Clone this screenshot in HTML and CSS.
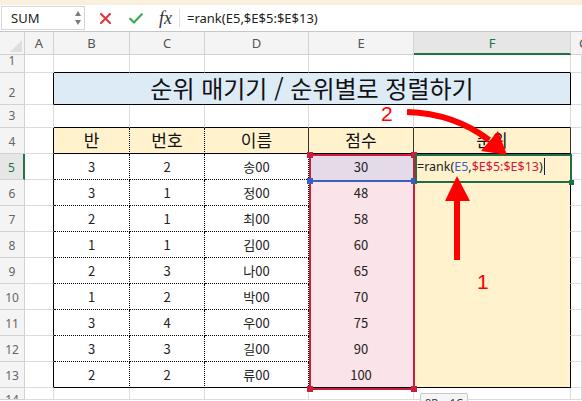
FILE: index.html
```html
<!DOCTYPE html>
<html lang="ko">
<head>
<meta charset="utf-8">
<link rel="stylesheet" href="styles.css">
</head>
<body>
<div class="strip"></div>
<div class="fbar">
  <div class="namebox"><span>SUM</span>
    <span class="spin"><span class="up"></span><span class="down"></span></span>
  </div>
  <svg class="ic-x" width="11" height="11" viewBox="0 0 11 11"><path d="M1 1L10 10M10 1L1 10" stroke="#e03a3e" stroke-width="2.2" stroke-linecap="round" fill="none"/></svg>
  <svg class="ic-ok" width="14" height="11" viewBox="0 0 14 11"><path d="M1.2 5.8L5 9.5L12.8 1.3" stroke="#3aaa56" stroke-width="2.2" stroke-linecap="round" stroke-linejoin="round" fill="none"/></svg>
  <span class="fx">fx</span>
  <span class="fsep"></span>
  <span class="ftext">=rank(E5,$E$5:$E$13)</span>
</div>
<div class="sheet">
  <div class="c corner"></div>
  <div class="c ch">A</div><div class="c ch">B</div><div class="c ch">C</div><div class="c ch">D</div><div class="c ch">E</div><div class="c ch sel">F</div><div class="c ch g">G</div>

  <div class="c rh">1</div><div class="c"></div><div class="c tb"></div><div class="c tb"></div><div class="c tb"></div><div class="c tb"></div><div class="c tb"></div><div class="c"></div>
  <div class="c rh">2</div><div class="c tl"></div><div class="c title">순위 매기기 / 순위별로 정렬하기</div><div class="c"></div>
  <div class="c rh">3</div><div class="c"></div><div class="c tb"></div><div class="c tb"></div><div class="c tb"></div><div class="c tb"></div><div class="c tb"></div><div class="c"></div>
  <div class="c rh">4</div><div class="c tl"></div><div class="c hd dot">반</div><div class="c hd dot">번호</div><div class="c hd solid">이름</div><div class="c hd solid">점수</div><div class="c hd solid">순위</div><div class="c"></div>

  <div class="c rh sel">5</div><div class="c tl"></div><div class="c d">3</div><div class="c d">2</div><div class="c d">송00</div><div class="c sc cur">30</div><div class="c rk"><span class="ftxt">=rank(<span class="ref-b">E5</span>,<span class="ref-r">$E$5:$E$13</span>)</span><span class="caret"></span></div><div class="c"></div>
  <div class="c rh">6</div><div class="c tl"></div><div class="c d">3</div><div class="c d">1</div><div class="c d">정00</div><div class="c sc">48</div><div class="c rk"></div><div class="c"></div>
  <div class="c rh">7</div><div class="c tl"></div><div class="c d">2</div><div class="c d">1</div><div class="c d">최00</div><div class="c sc">58</div><div class="c rk"></div><div class="c"></div>
  <div class="c rh">8</div><div class="c tl"></div><div class="c d">1</div><div class="c d">1</div><div class="c d">김00</div><div class="c sc">60</div><div class="c rk"></div><div class="c"></div>
  <div class="c rh">9</div><div class="c tl"></div><div class="c d">2</div><div class="c d">3</div><div class="c d">나00</div><div class="c sc">65</div><div class="c rk"></div><div class="c"></div>
  <div class="c rh">10</div><div class="c tl"></div><div class="c d">1</div><div class="c d">2</div><div class="c d">박00</div><div class="c sc">70</div><div class="c rk"></div><div class="c"></div>
  <div class="c rh">11</div><div class="c tl"></div><div class="c d">3</div><div class="c d">4</div><div class="c d">우00</div><div class="c sc">75</div><div class="c rk"></div><div class="c"></div>
  <div class="c rh">12</div><div class="c tl"></div><div class="c d">3</div><div class="c d">3</div><div class="c d">길00</div><div class="c sc">90</div><div class="c rk"></div><div class="c"></div>
  <div class="c rh">13</div><div class="c tl"></div><div class="c d lb">2</div><div class="c d lb">2</div><div class="c d lb">류00</div><div class="c sc lb">100</div><div class="c rk lb"></div><div class="c"></div>

  <div class="c rh last">14</div><div class="c"></div><div class="c"></div><div class="c"></div><div class="c"></div><div class="c"></div><div class="c"></div><div class="c"></div>
</div>

<div class="range-red"></div>
<div class="hdl red h-tl"></div>
<div class="hdl red h-tr"></div>
<div class="hdl red h-bl"></div>
<div class="hdl red h-br"></div>
<div class="range-blue"></div>
<div class="hdl blue b-l"></div>
<div class="hdl blue b-r"></div>
<div class="active"></div>
<div class="hdl green g-h"></div>
<div class="tip">9R x 1C</div>

<svg class="arrows" width="582" height="401" viewBox="0 0 582 401">
  <path d="M407 112 C440 113 468 124 489 140" stroke="#ff0000" stroke-width="6" fill="none"/>
  <polygon points="481,151 498,131 507,155" fill="#ff0000"/>
  <rect x="454" y="198" width="6" height="62" fill="#ff0000"/>
  <polygon points="445,201 470,201 457,176" fill="#ff0000"/>
  <text x="381" y="121" class="lbl">2</text>
  <text x="477" y="289" class="lbl">1</text>
</svg>
</body>
</html>
```

FILE: styles.css
```css
body {
  margin: 0;
  width: 582px;
  height: 401px;
  overflow: hidden;
  background: #fff;
  font-family: "Noto Sans CJK KR", "Noto Sans", sans-serif;
  position: relative;
}

.strip {
  height: 5px;
  background: #f8efdc;
}

.fbar {
  height: 27px;
  box-sizing: border-box;
  border-bottom: 1px solid #c6c6c6;
  display: flex;
  align-items: center;
  background: #fff;
}

.namebox {
  margin-left: 1px;
  width: 84px;
  height: 24px;
  box-sizing: border-box;
  border: 1px solid #d6d6d6;
  display: flex;
  align-items: center;
  justify-content: space-between;
  padding: 0 3px 0 9px;
  font-family: "Noto Sans", sans-serif;
  font-size: 13px;
  color: #222;
}

.spin {
  display: flex;
  flex-direction: column;
  gap: 4px;
}

.up, .down {
  width: 0;
  height: 0;
  border-left: 3.5px solid transparent;
  border-right: 3.5px solid transparent;
}
.up { border-bottom: 5px solid #7b7b7b; }
.down { border-top: 5px solid #7b7b7b; }

.ic-x { margin-left: 15px; }
.ic-ok { margin-left: 18px; }

.fx {
  margin-left: 16px;
  font-family: "Liberation Serif", serif;
  font-style: italic;
  font-size: 18px;
  color: #333;
  line-height: 1;
}

.fsep {
  width: 1px;
  height: 18px;
  background: #e0e0e0;
  margin-left: 7px;
}

.ftext {
  margin-left: 7px;
  font-family: "Noto Sans", sans-serif;
  font-size: 13px;
  color: #222;
}

.sheet {
  display: grid;
  grid-template-columns: 25px 29px 76px 75px 104px 105px 157px 1fr;
  grid-template-rows: 23px 18px 32px 23px repeat(10, 26px) 12px;
}

.c {
  box-sizing: border-box;
  border-right: 1px solid #dcdcdc;
  border-bottom: 1px solid #dcdcdc;
  display: flex;
  align-items: center;
  justify-content: center;
  font-size: 13px;
  color: #222;
  overflow: hidden;
  white-space: nowrap;
}

.corner {
  background: #f4f4f4;
  border-color: #d0d0d0;
  position: relative;
}
.corner::after {
  content: "";
  position: absolute;
  right: 2px;
  bottom: 2px;
  width: 0;
  height: 0;
  border-left: 12px solid transparent;
  border-bottom: 12px solid #dedede;
}

.ch {
  background: #f4f4f4;
  color: #555;
  border-color: #d2d2d2;
  font-family: "Noto Sans", sans-serif;
  font-size: 13px;
}
.ch.sel {
  background: #e6e6e6;
  color: #217346;
  border-bottom: 2px solid #217346;
}
.ch.g {
  justify-content: flex-start;
  padding-left: 8px;
  border-right: none;
}

.rh {
  background: #f4f4f4;
  color: #666;
  border-color: #d2d2d2;
  font-family: "Noto Sans", sans-serif;
  font-size: 12px;
  line-height: 12px;
  align-items: flex-end;
  padding-bottom: 5px;
}
.rh.sel {
  background: #e6e6e6;
  color: #217346;
  border-right: 2px solid #217346;
}
.rh.last {
  align-items: flex-start;
  padding-bottom: 0;
  padding-top: 6px;
}

.tb { border-bottom-color: #000; }
.tl { border-right-color: #000; }

.title {
  grid-column: span 5;
  background: #ddebf7;
  border-right-color: #000;
  border-bottom-color: #000;
  font-size: 24px;
  line-height: 1.1;
  color: #111;
}

.hd {
  background: #fff2cc;
  border-bottom-color: #000;
  font-size: 17px;
  line-height: 1.2;
  color: #111;
}
.hd.dot { border-right: 1px dotted #000; }
.hd.solid { border-right-color: #333; }

.d {
  border-right: 1px dotted #000;
  border-bottom: 1px dotted #000;
}

.sc {
  background: #fae3e9;
  border-color: transparent;
}
.sc.cur { background: #e5dae7; }

.rk {
  background: #fff2cc;
  border-bottom-color: transparent;
  border-right-color: #000;
  justify-content: flex-start;
  padding-left: 3px;
  font-family: "Noto Sans", sans-serif;
  font-size: 12.5px;
}

.ref-b { color: #3a62c8; }
.ref-r { color: #d0183a; }

.caret {
  display: inline-block;
  width: 1px;
  height: 17px;
  background: #1c1c50;
  margin-left: 1px;
}

.lb { border-bottom: 1px solid #000; }

.range-red {
  position: absolute;
  left: 309px;
  top: 154px;
  width: 106px;
  height: 236px;
  box-sizing: border-box;
  border: 2px solid #cc1d3e;
}

.range-blue {
  position: absolute;
  left: 309px;
  top: 180px;
  width: 106px;
  height: 2px;
  background: #3b5ec6;
}

.active {
  position: absolute;
  left: 415px;
  top: 154px;
  width: 157px;
  height: 29px;
  box-sizing: border-box;
  border: 2px solid #1e7044;
}

.hdl {
  position: absolute;
  width: 6px;
  height: 6px;
}
.hdl.red { background: #cc1d3e; }
.hdl.blue { background: #3b5ec6; }
.hdl.green { background: #1e7044; width: 5px; height: 5px; }

.h-tl { left: 307px; top: 152px; }
.h-tr { left: 411px; top: 152px; }
.h-bl { left: 307px; top: 386px; }
.h-br { left: 411px; top: 386px; }
.b-l { left: 307px; top: 178px; }
.b-r { left: 411px; top: 178px; }
.g-h { left: 569px; top: 180px; }

.tip {
  position: absolute;
  left: 420px;
  top: 393px;
  width: 48px;
  height: 20px;
  box-sizing: border-box;
  background: #f5f5f5;
  border: 1px solid #c8c8c8;
  border-radius: 2px;
  font-family: "Noto Sans", sans-serif;
  font-size: 11px;
  color: #333;
  padding: 1px 0 0 4px;
}

.arrows {
  position: absolute;
  left: 0;
  top: 0;
  pointer-events: none;
}

.lbl {
  font-family: "Liberation Sans", sans-serif;
  font-size: 21px;
  fill: #ff0000;
}
```
